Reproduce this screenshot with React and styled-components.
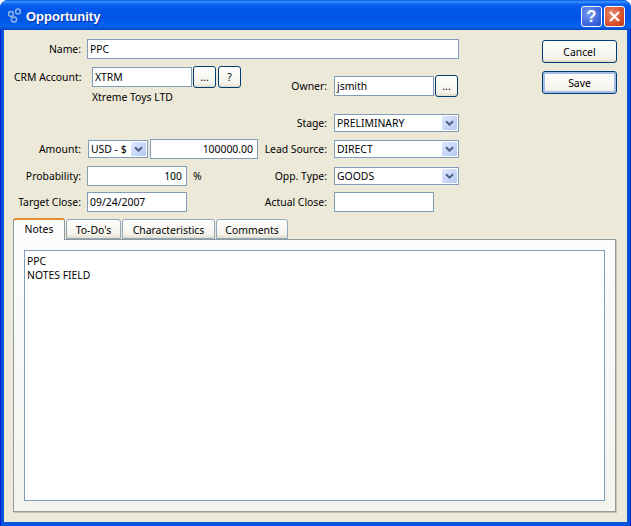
import React from "react";
import styled, { createGlobalStyle } from "styled-components";

const Global = createGlobalStyle`
  html, body { margin: 0; padding: 0; background: #fff; }
  body { font-family: "Noto Sans", "Liberation Sans", sans-serif; font-size: 10.4px; color: #000; }
`;
const Win = styled.div`
  width: 631px; height: 526px; box-sizing: border-box; display: flex; flex-direction: column;
  border-radius: 8px 8px 0 0; overflow: hidden;
  background: linear-gradient(90deg, #0019cf 0, #0855dd 2px, #0855dd calc(100% - 2px), #0019cf 100%);
`;
const TitleBar = styled.div`
  height: 30px; box-sizing: border-box; flex: none; display: flex; align-items: center; padding: 3px 6px 0 7px; gap: 2px;
  background: linear-gradient(180deg, #0a5ae0 0, #3a93ff 2px, #0d62ee 4px, #0058ec 8px, #0054e3 18px, #0161f3 25px, #0a5fe8 27px, #0047c8 30px);
`;
const TitleIcon = styled.svg` margin: -2px 2px 0 0; flex: none; `;
const TitleText = styled.span`
  flex: 1; color: #fff; font-family: "Liberation Sans", sans-serif; font-weight: 700; font-size: 13px; text-shadow: 1px 1px 0 #0f2f9f; margin-top: -1px;
`;
const CapBtn = styled.div`
  width: 21px; height: 21px; box-sizing: border-box; border: 1px solid #fff; border-radius: 3px; display: flex; align-items: center; justify-content: center;
  background: ${p => p.$red ? "radial-gradient(circle at 35% 35%, #e8886a, #d9512c 60%, #b83a16)" : "radial-gradient(circle at 35% 35%, #7a9cf0, #3f68de 60%, #2a49c0)"};
  color: #fff; font-family: "Liberation Sans", sans-serif; font-weight: 700; font-size: 16px;
`;
const Body = styled.div`
  flex: 1; margin: 0 4px 4px; background: #ece9d8; display: flex; flex-direction: column; padding: 9px 11px 10px 9px; box-sizing: border-box; min-height: 0;
`;
const Top = styled.div` display: flex; height: 180px; flex: none; `;
const Form = styled.div` width: 446px; margin-left: 1px; flex: none; display: flex; flex-direction: column; `;
const Columns = styled.div` display: flex; `;
const LeftCol = styled.div` width: 245px; flex: none; display: flex; flex-direction: column; `;
const RightCol = styled.div` width: 201px; flex: none; display: flex; flex-direction: column; `;
const Row = styled.div`
  display: flex; align-items: center; gap: 6px; height: ${p => p.$h || 20}px; margin-top: ${p => p.$mt || 0}px;
`;
const Label = styled.label` width: ${p => p.$w}px; flex: none; text-align: right; white-space: nowrap; line-height: 14px; `;
const Input = styled.div`
  width: ${p => p.$w}px; height: 20px; box-sizing: border-box; border: 1px solid #7f9db9; background: #fff; flex: none;
  padding: 0 ${p => p.$right ? 4 : 2}px 0 2px; margin-left: ${p => p.$ml || 0}px; line-height: 19px; white-space: nowrap;
  text-align: ${p => p.$right ? "right" : "left"};
`;
const SelectBox = styled.div`
  width: ${p => p.$w}px; height: 18px; box-sizing: border-box; border: 1px solid #7f9db9; background: #fff; flex: none; display: flex; align-items: center;
  justify-content: space-between; padding: 0 1px 0 2px; line-height: 16px; margin-left: ${p => p.$ml || 0}px;
`;
const Arrow = styled.span`
  width: 15px; height: 14px; flex: none; border-radius: 1px; background: linear-gradient(135deg, #dfe8fd, #b4c8f6); display: flex; align-items: center; justify-content: center;
`;
const SmallBtn = styled.button`
  width: 23px; height: 22px; box-sizing: border-box; flex: none; padding: 0; border: 1px solid #003c74; border-radius: 3px; font: inherit; color: #000; line-height: 18px;
  background: linear-gradient(180deg, #fff, #f3f2ea 85%, #dcd8c8); margin-left: ${p => p.$ml || 0}px;
`;
const Sub = styled.div` margin: 3px 0 0 78px; line-height: 14px; height: 17px; `;
const Pct = styled.span` margin-left: 0; `;
const Buttons = styled.div` margin-left: 82px; padding-top: 1px; display: flex; flex-direction: column; gap: 8px; `;
const MainBtn = styled.button`
  width: 75px; height: 23px; box-sizing: border-box; padding: 0; border: 1px solid #003c74; border-radius: 3px; font: inherit; color: #000;
  background: linear-gradient(180deg, #fff, #f3f2ea 85%, #dcd8c8);
  box-shadow: ${p => p.$def ? "inset 0 0 0 2px #a5bde8" : "none"};
`;
const Tabs = styled.div` display: flex; align-items: flex-end; height: 21px; flex: none; position: relative; z-index: 1; gap: 1px; margin-top: -1px; `;
const Tab = styled.div`
  box-sizing: border-box; width: ${p => p.$w}px; height: ${p => p.$on ? 22 : 20}px; text-align: center; border: 1px solid #919b9c; border-radius: 3px 3px 0 0;
  line-height: ${p => p.$on ? 19 : 21}px;
  background: ${p => p.$on ? "#fcfcfe" : "linear-gradient(180deg, #fff, #f3f2ea 80%, #e2dfd0)"};
  border-color: ${p => p.$on ? "#919b9c" : "#8fa6bd"};
  ${p => p.$on ? "border-top: 2px solid #e68b2c; border-bottom: none; margin-bottom: -1px;" : ""}
`;
const Pane = styled.div`
  flex: 1; min-height: 0; box-sizing: border-box; border: 1px solid #919b9c; background: linear-gradient(180deg, #fcfcfe, #f4f3ee); padding: 10px;
  box-shadow: 1px 1px 0 #c5c2b2;
`;
const Notes = styled.div` height: 100%; box-sizing: border-box; border: 1px solid #7f9db9; background: #fff; padding: 3px 2px; line-height: 14px; `;

const Chevron = () => (
  <svg width="9" height="7" viewBox="0 0 9 7"><path d="M1 1.2 4.5 4.7 8 1.2" fill="none" stroke="#4d6185" strokeWidth="2"/></svg>
);
const Select = ({ w, ml, children }) => (
  <SelectBox $w={w} $ml={ml}><span>{children}</span><Arrow><Chevron /></Arrow></SelectBox>
);

export default function App() {
  return (
    <Win>
      <Global />
      <TitleBar>
        <TitleIcon width="15" height="15" viewBox="0 0 15 15" fill="none" stroke="#8fb3e8" strokeWidth="1.5">
          <circle cx="4" cy="6" r="2.4"/><circle cx="11" cy="3.5" r="2.4"/><circle cx="7" cy="11.5" r="2.6"/>
        </TitleIcon>
        <TitleText>Opportunity</TitleText>
        <CapBtn>?</CapBtn>
        <CapBtn $red>
          <svg width="13" height="13" viewBox="0 0 13 13"><path d="M2 2 11 11M11 2 2 11" stroke="#fff" strokeWidth="2.2"/></svg>
        </CapBtn>
      </TitleBar>
      <Body>
        <Top>
          <Form>
            <Row>
              <Label $w={67}>Name:</Label>
              <Input $w={372}>PPC</Input>
            </Row>
            <Columns>
              <LeftCol>
                <Row $mt={8}>
                  <Label $w={67}>CRM Account:</Label>
                  <Input $w={100} $ml={5}>XTRM</Input>
                  <SmallBtn $ml={-5}>...</SmallBtn>
                  <SmallBtn $ml={-4}>?</SmallBtn>
                </Row>
                <Sub>Xtreme Toys LTD</Sub>
                <Row $mt={32}>
                  <Label $w={67}>Amount:</Label>
                  <Select w={60} ml={1}>USD - $</Select>
                  <Input $w={108} $ml={-4} $right>100000.00</Input>
                </Row>
                <Row $mt={7}>
                  <Label $w={67}>Probability:</Label>
                  <Input $w={100} $right>100</Input>
                  <Pct>%</Pct>
                </Row>
                <Row $mt={6}>
                  <Label $w={67}>Target Close:</Label>
                  <Input $w={100}>09/24/2007</Input>
                </Row>
              </LeftCol>
              <RightCol>
                <Row $mt={17}>
                  <Label $w={68}>Owner:</Label>
                  <Input $w={100} $ml={1}>jsmith</Input>
                  <SmallBtn $ml={-5}>...</SmallBtn>
                </Row>
                <Row $mt={18} $h={18}>
                  <Label $w={68}>Stage:</Label>
                  <Select w={125} ml={1}>PRELIMINARY</Select>
                </Row>
                <Row $mt={8} $h={18}>
                  <Label $w={68}>Lead Source:</Label>
                  <Select w={125} ml={1}>DIRECT</Select>
                </Row>
                <Row $mt={9} $h={18}>
                  <Label $w={68}>Opp. Type:</Label>
                  <Select w={125} ml={1}>GOODS</Select>
                </Row>
                <Row $mt={7}>
                  <Label $w={68}>Actual Close:</Label>
                  <Input $w={100} $ml={1}></Input>
                </Row>
              </RightCol>
            </Columns>
          </Form>
          <Buttons>
            <MainBtn>Cancel</MainBtn>
            <MainBtn $def>Save</MainBtn>
          </Buttons>
        </Top>
        <Tabs>
          <Tab $on $w={52}>Notes</Tab>
          <Tab $w={55}>To-Do's</Tab>
          <Tab $w={93}>Characteristics</Tab>
          <Tab $w={72}>Comments</Tab>
        </Tabs>
        <Pane>
          <Notes>PPC<br />NOTES FIELD</Notes>
        </Pane>
      </Body>
    </Win>
  );
}
